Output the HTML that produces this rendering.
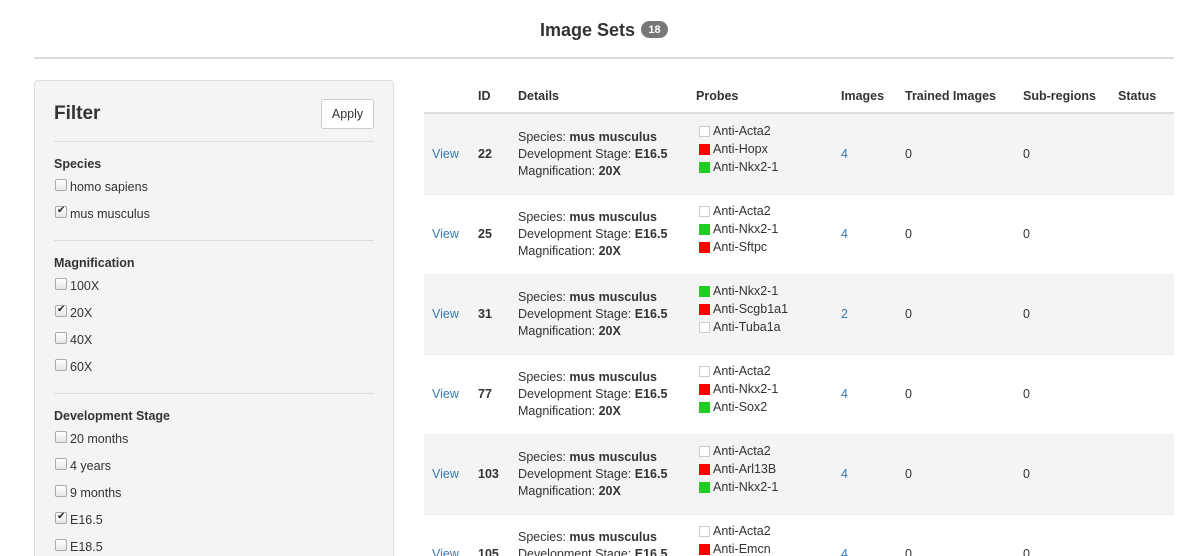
<!DOCTYPE html>
<html style="overflow:hidden;height:556px"><head><meta charset="utf-8"><style>
*{margin:0;padding:0;box-sizing:border-box}
body{width:1203px;height:556px;overflow:hidden;background:#fff;font-family:"Liberation Sans",sans-serif;font-size:12.5px;color:#333;position:relative}
#wrap{position:absolute;left:0;top:0;width:1203px;height:556px;overflow:hidden}
.a{position:absolute;line-height:18px;white-space:nowrap;margin-top:1px}
b{font-weight:bold}
.hr{position:absolute;height:1px;background:#ddd}
.cb{position:absolute;width:12px;height:12px;border:1px solid #aaa;border-radius:2px;background:linear-gradient(#fff,#e6e6e6)}
.ck::after{content:"✔";position:absolute;left:1px;top:-2px;font-size:10px;line-height:12px;color:#222}
.row{position:absolute;left:424px;width:750px;height:80px}
.g{background:#f4f4f4}
.sq{position:absolute;width:11px;height:11px;margin-top:1px}
.w{border:1px solid #ccc;background:#fff}.r{background:#f00}.gr{background:#2c2}
.lk{color:#337ab7}
</style></head><body><div id="wrap">
<div class="a" style="left:540px;top:17px;font-size:18px;font-weight:bold;line-height:24px">Image Sets</div>
<div style="position:absolute;left:641px;top:21px;width:27px;height:17px;border-radius:9px;background:#777;color:#fff;font-size:11px;font-weight:bold;display:flex;align-items:center;justify-content:center">18</div>
<div class="hr" style="left:34px;top:57px;width:1140px;height:2px"></div>

<div style="position:absolute;left:34px;top:80px;width:360px;height:500px;background:#f4f4f4;border:1px solid #ddd;border-radius:4px"></div>
<div class="a" style="left:54px;top:101px;font-size:19px;font-weight:bold;line-height:24px">Filter</div>
<div style="position:absolute;left:321px;top:99px;width:53px;height:30px;border:1px solid #ccc;border-radius:3px;background:#fff;display:flex;align-items:center;justify-content:center">Apply</div>
<div class="hr" style="left:54px;top:141px;width:320px"></div>
<div class="a" style="left:54px;top:154px"><b>Species</b></div>
<div class="cb" style="left:55px;top:179px"></div><div class="a" style="left:70px;top:177px">homo sapiens</div>
<div class="cb ck" style="left:55px;top:206px"></div><div class="a" style="left:70px;top:204px">mus musculus</div>
<div class="hr" style="left:54px;top:240px;width:320px"></div>
<div class="a" style="left:54px;top:253px"><b>Magnification</b></div>
<div class="cb" style="left:55px;top:278px"></div><div class="a" style="left:70px;top:276px">100X</div>
<div class="cb ck" style="left:55px;top:305px"></div><div class="a" style="left:70px;top:303px">20X</div>
<div class="cb" style="left:55px;top:332px"></div><div class="a" style="left:70px;top:330px">40X</div>
<div class="cb" style="left:55px;top:359px"></div><div class="a" style="left:70px;top:357px">60X</div>
<div class="hr" style="left:54px;top:393px;width:320px"></div>
<div class="a" style="left:54px;top:406px"><b>Development Stage</b></div>
<div class="cb" style="left:55px;top:431px"></div><div class="a" style="left:70px;top:429px">20 months</div>
<div class="cb" style="left:55px;top:458px"></div><div class="a" style="left:70px;top:456px">4 years</div>
<div class="cb" style="left:55px;top:485px"></div><div class="a" style="left:70px;top:483px">9 months</div>
<div class="cb ck" style="left:55px;top:512px"></div><div class="a" style="left:70px;top:510px">E16.5</div>
<div class="cb" style="left:55px;top:539px"></div><div class="a" style="left:70px;top:537px">E18.5</div>

<div class="a" style="left:478px;top:86px"><b>ID</b></div>
<div class="a" style="left:518px;top:86px"><b>Details</b></div>
<div class="a" style="left:696px;top:86px"><b>Probes</b></div>
<div class="a" style="left:841px;top:86px"><b>Images</b></div>
<div class="a" style="left:905px;top:86px"><b>Trained Images</b></div>
<div class="a" style="left:1023px;top:86px"><b>Sub-regions</b></div>
<div class="a" style="left:1118px;top:86px"><b>Status</b></div>
<div class="hr" style="left:424px;top:112px;width:750px;height:2px"></div>

<div class="row g" style="top:114px"></div>
<div class="row" style="top:194px;border-top:1px solid #eee"></div>
<div class="row g" style="top:274px"></div>
<div class="row" style="top:354px;border-top:1px solid #eee"></div>
<div class="row g" style="top:434px"></div>
<div class="row" style="top:514px;border-top:1px solid #eee"></div>

<div class="a lk" style="left:432px;top:144px">View</div><div class="a" style="left:478px;top:144px"><b>22</b></div>
<div class="a" style="left:518px;top:127px">Species: <b>mus musculus</b></div>
<div class="a" style="left:518px;top:144px">Development Stage: <b>E16.5</b></div>
<div class="a" style="left:518px;top:161px">Magnification: <b>20X</b></div>
<div class="sq w" style="left:699px;top:125px"></div><div class="a" style="left:713px;top:121px">Anti-Acta2</div>
<div class="sq r" style="left:699px;top:143px"></div><div class="a" style="left:713px;top:139px">Anti-Hopx</div>
<div class="sq gr" style="left:699px;top:161px"></div><div class="a" style="left:713px;top:157px">Anti-Nkx2-1</div>
<div class="a lk" style="left:841px;top:144px">4</div><div class="a" style="left:905px;top:144px">0</div><div class="a" style="left:1023px;top:144px">0</div>

<div class="a lk" style="left:432px;top:224px">View</div><div class="a" style="left:478px;top:224px"><b>25</b></div>
<div class="a" style="left:518px;top:207px">Species: <b>mus musculus</b></div>
<div class="a" style="left:518px;top:224px">Development Stage: <b>E16.5</b></div>
<div class="a" style="left:518px;top:241px">Magnification: <b>20X</b></div>
<div class="sq w" style="left:699px;top:205px"></div><div class="a" style="left:713px;top:201px">Anti-Acta2</div>
<div class="sq gr" style="left:699px;top:223px"></div><div class="a" style="left:713px;top:219px">Anti-Nkx2-1</div>
<div class="sq r" style="left:699px;top:241px"></div><div class="a" style="left:713px;top:237px">Anti-Sftpc</div>
<div class="a lk" style="left:841px;top:224px">4</div><div class="a" style="left:905px;top:224px">0</div><div class="a" style="left:1023px;top:224px">0</div>

<div class="a lk" style="left:432px;top:304px">View</div><div class="a" style="left:478px;top:304px"><b>31</b></div>
<div class="a" style="left:518px;top:287px">Species: <b>mus musculus</b></div>
<div class="a" style="left:518px;top:304px">Development Stage: <b>E16.5</b></div>
<div class="a" style="left:518px;top:321px">Magnification: <b>20X</b></div>
<div class="sq gr" style="left:699px;top:285px"></div><div class="a" style="left:713px;top:281px">Anti-Nkx2-1</div>
<div class="sq r" style="left:699px;top:303px"></div><div class="a" style="left:713px;top:299px">Anti-Scgb1a1</div>
<div class="sq w" style="left:699px;top:321px"></div><div class="a" style="left:713px;top:317px">Anti-Tuba1a</div>
<div class="a lk" style="left:841px;top:304px">2</div><div class="a" style="left:905px;top:304px">0</div><div class="a" style="left:1023px;top:304px">0</div>

<div class="a lk" style="left:432px;top:384px">View</div><div class="a" style="left:478px;top:384px"><b>77</b></div>
<div class="a" style="left:518px;top:367px">Species: <b>mus musculus</b></div>
<div class="a" style="left:518px;top:384px">Development Stage: <b>E16.5</b></div>
<div class="a" style="left:518px;top:401px">Magnification: <b>20X</b></div>
<div class="sq w" style="left:699px;top:365px"></div><div class="a" style="left:713px;top:361px">Anti-Acta2</div>
<div class="sq r" style="left:699px;top:383px"></div><div class="a" style="left:713px;top:379px">Anti-Nkx2-1</div>
<div class="sq gr" style="left:699px;top:401px"></div><div class="a" style="left:713px;top:397px">Anti-Sox2</div>
<div class="a lk" style="left:841px;top:384px">4</div><div class="a" style="left:905px;top:384px">0</div><div class="a" style="left:1023px;top:384px">0</div>

<div class="a lk" style="left:432px;top:464px">View</div><div class="a" style="left:478px;top:464px"><b>103</b></div>
<div class="a" style="left:518px;top:447px">Species: <b>mus musculus</b></div>
<div class="a" style="left:518px;top:464px">Development Stage: <b>E16.5</b></div>
<div class="a" style="left:518px;top:481px">Magnification: <b>20X</b></div>
<div class="sq w" style="left:699px;top:445px"></div><div class="a" style="left:713px;top:441px">Anti-Acta2</div>
<div class="sq r" style="left:699px;top:463px"></div><div class="a" style="left:713px;top:459px">Anti-Arl13B</div>
<div class="sq gr" style="left:699px;top:481px"></div><div class="a" style="left:713px;top:477px">Anti-Nkx2-1</div>
<div class="a lk" style="left:841px;top:464px">4</div><div class="a" style="left:905px;top:464px">0</div><div class="a" style="left:1023px;top:464px">0</div>

<div class="a lk" style="left:432px;top:544px">View</div><div class="a" style="left:478px;top:544px"><b>105</b></div>
<div class="a" style="left:518px;top:527px">Species: <b>mus musculus</b></div>
<div class="a" style="left:518px;top:544px">Development Stage: <b>E16.5</b></div>
<div class="sq w" style="left:699px;top:525px"></div><div class="a" style="left:713px;top:521px">Anti-Acta2</div>
<div class="sq r" style="left:699px;top:543px"></div><div class="a" style="left:713px;top:539px">Anti-Emcn</div>
<div class="a lk" style="left:841px;top:544px">4</div><div class="a" style="left:905px;top:544px">0</div><div class="a" style="left:1023px;top:544px">0</div>
</div></body></html>
